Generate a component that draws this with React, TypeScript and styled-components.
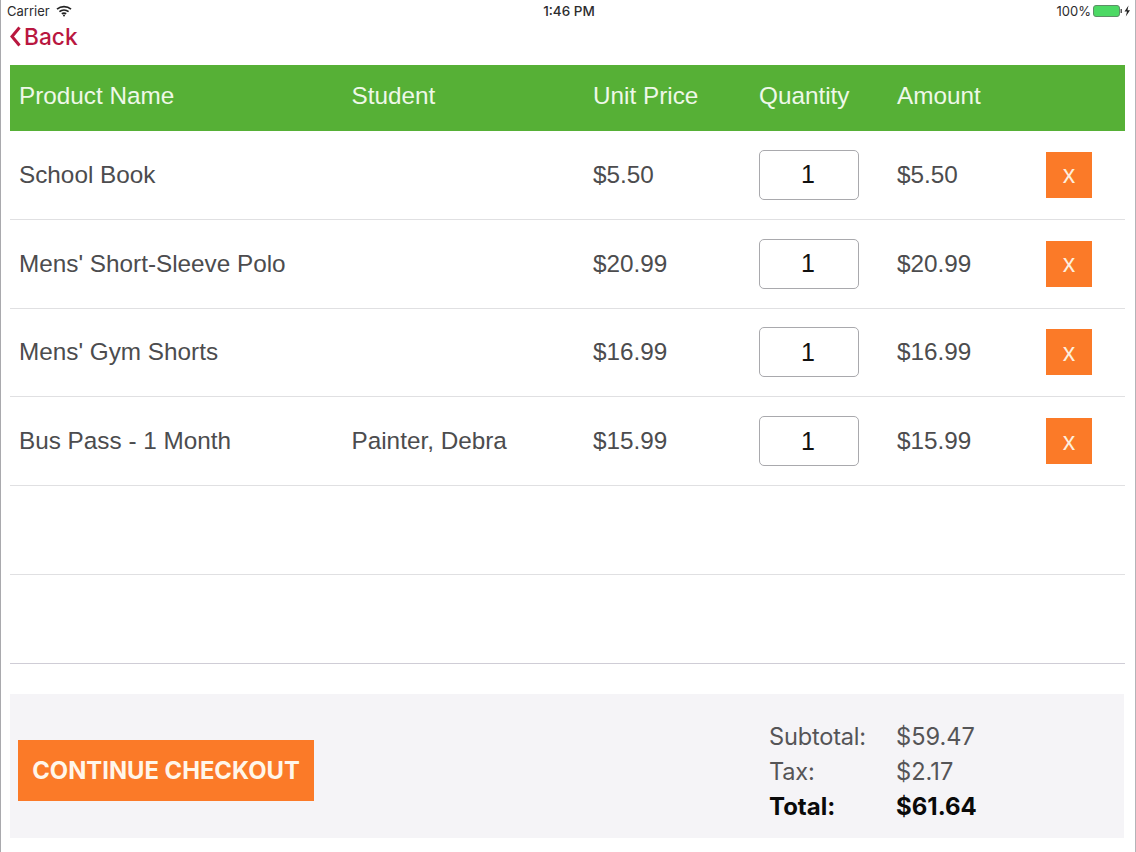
import React from 'react';
import styled, { createGlobalStyle } from 'styled-components';

const GlobalStyle = createGlobalStyle`
  html, body {
    margin: 0;
    padding: 0;
    background: #fff;
  }
`;

const Page = styled.div`
  width: 1136px;
  height: 852px;
  box-sizing: border-box;
  background: #fff;
  border-left: 1px solid #a9a9ad;
  border-right: 1px solid #b4b4b8;
  font-family: "Liberation Sans", Arial, sans-serif;
  overflow: hidden;
`;

const StatusBar = styled.div`
  height: 22px;
  display: grid;
  grid-template-columns: 1fr auto 1fr;
  align-items: center;
  padding: 0 4px 0 6px;
  font-family: Inter, "Liberation Sans", sans-serif;
  font-size: 13px;
  color: #2c2c2e;
`;

const StatusLeft = styled.div`
  display: flex;
  align-items: center;
  gap: 6px;
`;

const StatusTime = styled.div`
  font-size: 13.5px;
  font-weight: 500;
`;

const StatusRight = styled.div`
  display: flex;
  align-items: center;
  justify-content: flex-end;
  gap: 2px;
`;

const BackRow = styled.div`
  height: 43px;
  padding-left: 9px;
`;

const BackLink = styled.a`
  display: inline-flex;
  align-items: center;
  gap: 3px;
  height: 29px;
  font-family: Inter, "Liberation Sans", sans-serif;
  font-size: 22.7px;
  font-weight: 500;
  color: #b9173f;
`;

const Table = styled.div`
  margin: 0 10px 0 9px;
`;

const Columns = styled.div`
  display: grid;
  grid-template-columns: 332.5px 241.5px 166px 138px 149px 1fr;
  align-items: center;
  padding-left: 9px;
`;

const HeaderRow = styled(Columns)`
  height: 66px;
  box-sizing: border-box;
  padding-bottom: 4px;
  background: #56b036;
  color: #eef8e8;
  font-size: 24.3px;
`;

const Row = styled(Columns)<{ $last?: boolean }>`
  height: 88.8px;
  box-sizing: border-box;
  border-bottom: 1px solid ${(p) => (p.$last ? '#cfcdd6' : '#e0e0e2')};
  color: #4c4c4e;
  font-size: 24.3px;
`;

const QuantityBox = styled.div`
  width: 100px;
  height: 50px;
  box-sizing: border-box;
  padding-right: 2px;
  display: flex;
  align-items: center;
  justify-content: center;
  border: 1px solid #a9a9ad;
  border-radius: 5px;
  color: #111;
  font-size: 25px;
`;

const RemoveButton = styled.div`
  width: 46px;
  height: 46px;
  display: flex;
  align-items: center;
  justify-content: center;
  background: #fb7a28;
  color: #fdeede;
  font-size: 25px;
`;

const Footer = styled.div`
  margin: 30px 11px 0 9px;
  height: 144px;
  display: flex;
  align-items: flex-start;
  justify-content: space-between;
  background: #f5f4f7;
  padding-left: 8px;
`;

const CheckoutButton = styled.div`
  width: 296px;
  height: 61px;
  margin-top: 46px;
  display: flex;
  align-items: center;
  justify-content: center;
  background: #fb7a28;
  color: #fff6ea;
  font-family: Inter, "Liberation Sans", sans-serif;
  font-size: 23.8px;
  font-weight: 700;
`;

const Totals = styled.div`
  width: 355px;
  margin-top: 25px;
  display: grid;
  grid-template-columns: 127px 1fr;
  grid-auto-rows: 35px;
  align-items: center;
  font-family: Inter, "Liberation Sans", sans-serif;
  font-size: 23.6px;
  color: #555557;
`;

const TotalLabel = styled.div`
  letter-spacing: -0.2px;
`;

const TotalStrong = styled.div`
  font-size: 24px;
  font-weight: 700;
  color: #0a0a0a;
`;

const WifiIcon = () => (
  <svg width="16" height="12" viewBox="0 0 16 12" fill="none" stroke="#222" strokeWidth="1.7" strokeLinecap="butt">
    <path d="M1 4.2C5 .8 11 .8 15 4.2" />
    <path d="M3.4 6.6C6 4.6 10 4.6 12.6 6.6" />
    <path d="M5.8 8.8C7.1 7.9 8.9 7.9 10.2 8.8" />
    <circle cx="8" cy="10.6" r="1" fill="#222" stroke="none" />
  </svg>
);

const BatteryIcon = () => (
  <svg width="38" height="12" viewBox="0 0 38 12">
    <rect x="0.5" y="0.5" width="26" height="11" rx="2.5" fill="#4cd964" stroke="#5d8f66" />
    <rect x="27.5" y="4" width="1.5" height="4" fill="#555" />
    <path d="M35.5 0.5L31.5 6.6H34L32.8 11.5L37 5.2H34.5Z" fill="#222" />
  </svg>
);

const BackChevron = () => (
  <svg width="11" height="21" viewBox="0 0 11 21" fill="none" stroke="#b9173f" strokeWidth="3">
    <path d="M9.5 1.5L2 10.5L9.5 19.5" />
  </svg>
);

type CartItem = {
  name: string;
  student: string;
  price: string;
};

const items: CartItem[] = [
  { name: 'School Book', student: '', price: '$5.50' },
  { name: "Mens' Short-Sleeve Polo", student: '', price: '$20.99' },
  { name: "Mens' Gym Shorts", student: '', price: '$16.99' },
  { name: 'Bus Pass - 1 Month', student: 'Painter, Debra', price: '$15.99' },
];

export default function App() {
  return (
    <Page>
      <GlobalStyle />
      <StatusBar>
        <StatusLeft>
          Carrier
          <WifiIcon />
        </StatusLeft>
        <StatusTime>1:46 PM</StatusTime>
        <StatusRight>
          100%
          <BatteryIcon />
        </StatusRight>
      </StatusBar>
      <BackRow>
        <BackLink>
          <BackChevron />
          Back
        </BackLink>
      </BackRow>
      <Table>
        <HeaderRow>
          <div>Product Name</div>
          <div>Student</div>
          <div>Unit Price</div>
          <div>Quantity</div>
          <div>Amount</div>
          <div />
        </HeaderRow>
        {items.map((item) => (
          <Row key={item.name}>
            <div>{item.name}</div>
            <div>{item.student}</div>
            <div>{item.price}</div>
            <QuantityBox>1</QuantityBox>
            <div>{item.price}</div>
            <RemoveButton>x</RemoveButton>
          </Row>
        ))}
        <Row />
        <Row $last />
      </Table>
      <Footer>
        <CheckoutButton>CONTINUE CHECKOUT</CheckoutButton>
        <Totals>
          <TotalLabel>Subtotal:</TotalLabel>
          <div>$59.47</div>
          <TotalLabel>Tax:</TotalLabel>
          <div>$2.17</div>
          <TotalStrong>Total:</TotalStrong>
          <TotalStrong>$61.64</TotalStrong>
        </Totals>
      </Footer>
    </Page>
  );
}
